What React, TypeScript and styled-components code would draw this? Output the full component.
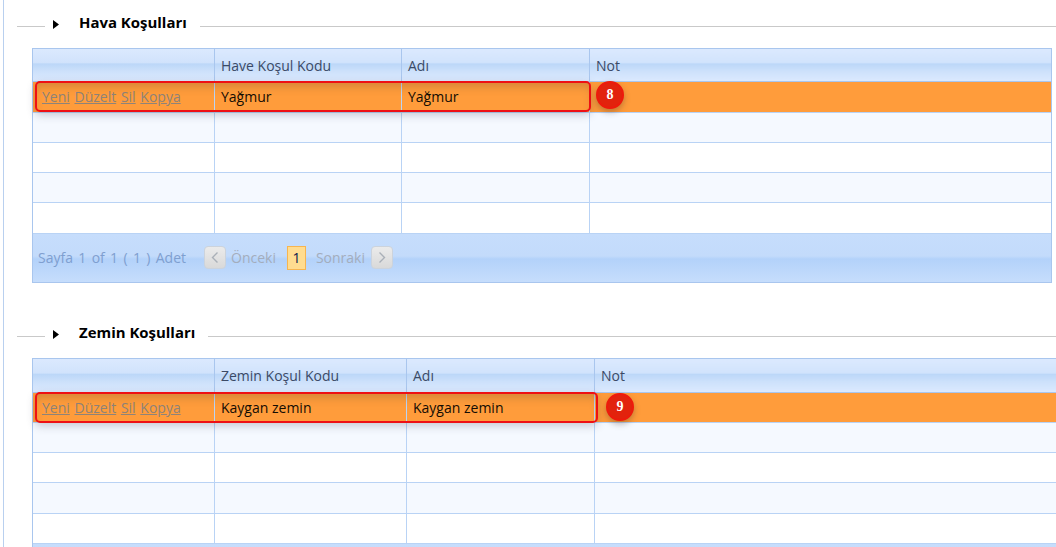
import React from "react";
import styled, { createGlobalStyle } from "styled-components";

const Global = createGlobalStyle`
  html, body { margin: 0; padding: 0; background: #fff; }
  body { width: 1056px; height: 547px; overflow: hidden; font-family: "Open Sans", "Noto Sans", sans-serif; }
`;

const Page = styled.div`
  width: 1053px;
  height: 547px;
  margin-left: 3px;
  border-left: 1px solid #b9d0ef;
  overflow: hidden;
  padding-top: 13px;
  box-sizing: border-box;
`;

const Section = styled.section<{ $gap: number }>`
  margin-bottom: ${(p) => p.$gap}px;
`;

const Title = styled.div<{ $after: number }>`
  display: flex;
  align-items: center;
  height: 22px;
  margin-left: 13px;
  margin-bottom: ${(p) => p.$after}px;
  width: 1200px;
`;

const RuleShort = styled.span`
  width: 28px;
  height: 1px;
  background: #c9c9c9;
  margin-top: 4px;
`;

const RuleLong = styled.span`
  flex: 1;
  height: 1px;
  background: #c9c9c9;
  margin-left: 13px;
  margin-top: 4px;
`;

const Arrow = styled.svg`
  width: 6px;
  height: 9px;
  margin-left: 8px;
  margin-right: 20px;
`;

const Heading = styled.h3<{ $lift: number }>`
  margin: ${(p) => -p.$lift}px 0 0;
  font: 700 14.95px "Open Sans", sans-serif;
  color: #000;
`;

const GridWrap = styled.div<{ $width: number }>`
  position: relative;
  width: ${(p) => p.$width}px;
  margin-left: 28px;
  border: 1px solid #a9c6ee;
  box-sizing: border-box;
`;

const Table = styled.table`
  border-collapse: collapse;
  table-layout: fixed;
  width: 100%;
`;

const HeadRow = styled.tr<{ $h: number }>`
  height: ${(p) => p.$h}px;
`;

const HeadCell = styled.th<{ $top: number }>`
  padding: ${(p) => p.$top}px 6.5px 0;
  box-sizing: border-box;
  text-align: left;
  font: 400 14px "Open Sans", sans-serif;
  color: #3b4a66;
  background: linear-gradient(#dbe9fe 0%, #d1e3fc 42%, #bcd7f8 47%, #cde1fb 70%, #dbe9fe 100%);
  border-right: 1px solid #a9c6ee;
  border-bottom: 1px solid #a9c6ee;
  &:last-child { border-right: 0; }
`;

const Row = styled.tr<{ $tone: "selected" | "alt" | "plain"; $h: number }>`
  height: ${(p) => p.$h}px;
  background: ${(p) => (p.$tone === "selected" ? "#ff9c3b" : p.$tone === "alt" ? "#f5f9ff" : "#fff")};
`;

const Cell = styled.td`
  padding: 0 6.5px;
  box-sizing: border-box;
  font: 400 14px "Open Sans", sans-serif;
  color: #140d04;
  border-right: 1px solid #b9d3f5;
  border-bottom: 1px solid #b9d3f5;
  white-space: nowrap;
  &:last-child { border-right: 0; }
`;

const LinkCell = styled(Cell)`
  padding-left: 9px;
`;

const RowLink = styled.a`
  color: #8e8379;
  text-decoration: underline;
  margin-right: 4.7px;
`;

const Pager = styled.div`
  display: flex;
  align-items: center;
  height: 48px;
  padding-left: 5px;
  box-sizing: border-box;
  background: linear-gradient(#c6ddfc 0%, #c3dbfb 46%, #b3d2fa 52%, #c6ddfc 100%);
  font: 400 14px "Open Sans", sans-serif;
`;

const PagerInfo = styled.span`
  color: #7f9fd0;
  margin-right: 18px;
  word-spacing: 1.7px;
`;

const PagerButton = styled.span`
  display: flex;
  align-items: center;
  justify-content: center;
  width: 22px;
  height: 23px;
  border-radius: 4px;
  border: 1px solid #ccd3dc;
  box-sizing: border-box;
  background: linear-gradient(#ebebeb, #d9d9d9);
`;

const PagerLabel = styled.span<{ $l: number; $r: number }>`
  color: #a3adbd;
  margin-left: ${(p) => p.$l}px;
  margin-right: ${(p) => p.$r}px;
`;

const PageNumber = styled.span`
  display: flex;
  align-items: center;
  justify-content: center;
  width: 19px;
  height: 24px;
  box-sizing: border-box;
  background: #ffdc90;
  border: 1px solid #f7b550;
  color: #0b1a4d;
`;

const Highlight = styled.div<{ $w: number; $t: number; $h: number }>`
  position: absolute;
  left: 2px;
  top: ${(p) => p.$t}px;
  width: ${(p) => p.$w}px;
  height: ${(p) => p.$h}px;
  box-sizing: border-box;
  border: 2px solid #ee1014;
  border-radius: 5px;
  box-shadow: 0 3px 8px rgba(60, 60, 80, 0.25), inset 0 7px 8px -3px rgba(90, 70, 50, 0.25);
  pointer-events: none;
`;

const Badge = styled.div<{ $l: number; $t: number }>`
  position: absolute;
  left: ${(p) => p.$l}px;
  top: ${(p) => p.$t}px;
  width: 28px;
  height: 28px;
  border-radius: 50%;
  box-sizing: border-box;
  background: #e2230d;
  border: 2px solid #ee1a0c;
  box-shadow: 0 3px 6px rgba(70, 50, 40, 0.35);
  display: flex;
  align-items: center;
  justify-content: center;
  color: #fff;
  font: 700 14px "Liberation Serif", serif;
`;

const Chevron = ({ left }: { left?: boolean }) => (
  <svg width="10" height="13" viewBox="0 0 10 13" fill="none">
    <path d={left ? "M7.5 1.5 2.5 6.5 7.5 11.5" : "M2.5 1.5 7.5 6.5 2.5 11.5"} stroke="#aab0b8" strokeWidth="1.4" />
  </svg>
);

const TitleArrow = () => (
  <Arrow viewBox="0 0 6 9">
    <path d="M0 0 6 4.5 0 9Z" fill="#000" />
  </Arrow>
);

type GridProps = {
  width: number;
  cols: number[];
  code: string;
  value: string;
  headH: number;
  headTop: number;
  rowH: number[];
  pagerContent?: boolean;
  mark: string;
  hl: { w: number; t: number; h: number };
  badge: { l: number; t: number };
};

const Grid = ({ width, cols, code, value, headH, headTop, rowH, pagerContent, mark, hl, badge }: GridProps) => (
  <GridWrap $width={width}>
    <Table>
      <colgroup>
        {cols.map((c, i) => (
          <col key={i} style={{ width: c }} />
        ))}
        <col />
      </colgroup>
      <thead>
        <HeadRow $h={headH}>
          <HeadCell $top={headTop} />
          <HeadCell $top={headTop}>{code}</HeadCell>
          <HeadCell $top={headTop}>Adı</HeadCell>
          <HeadCell $top={headTop}>Not</HeadCell>
        </HeadRow>
      </thead>
      <tbody>
        {rowH.map((h, i) => (
          <Row key={i} $h={h} $tone={i === 0 ? "selected" : i % 2 ? "alt" : "plain"}>
            {i === 0 ? (
              <>
                <LinkCell>
                  <RowLink>Yeni</RowLink>
                  <RowLink>Düzelt</RowLink>
                  <RowLink>Sil</RowLink>
                  <RowLink>Kopya</RowLink>
                </LinkCell>
                <Cell>{value}</Cell>
                <Cell>{value}</Cell>
                <Cell />
              </>
            ) : (
              <>
                <Cell />
                <Cell />
                <Cell />
                <Cell />
              </>
            )}
          </Row>
        ))}
      </tbody>
    </Table>
    <Pager>
      {pagerContent && (
        <>
          <PagerInfo>Sayfa 1 of 1 ( 1 ) Adet</PagerInfo>
          <PagerButton>
            <Chevron left />
          </PagerButton>
          <PagerLabel $l={5} $r={11}>Önceki</PagerLabel>
          <PageNumber>1</PageNumber>
          <PagerLabel $l={10} $r={6}>Sonraki</PagerLabel>
          <PagerButton>
            <Chevron />
          </PagerButton>
        </>
      )}
    </Pager>
    <Highlight $w={hl.w} $t={hl.t} $h={hl.h} />
    <Badge $l={badge.l} $t={badge.t}>{mark}</Badge>
  </GridWrap>
);

export default function App() {
  return (
    <Page>
      <Global />
      <Section $gap={41}>
        <Title $after={13}>
          <RuleShort />
          <TitleArrow />
          <Heading $lift={4}>Hava Koşulları</Heading>
          <RuleLong />
        </Title>
        <Grid
          width={1020}
          cols={[181, 187, 188]}
          code="Have Koşul Kodu"
          value="Yağmur"
          headH={32}
          headTop={2}
          rowH={[31, 30, 30, 30, 31]}
          pagerContent
          mark="8"
          hl={{ w: 556, t: 32, h: 31 }}
          badge={{ l: 563, t: 32 }}
        />
      </Section>
      <Section $gap={0}>
        <Title $after={12}>
          <RuleShort />
          <TitleArrow />
          <Heading $lift={6}>Zemin Koşulları</Heading>
          <RuleLong />
        </Title>
        <Grid
          width={1100}
          cols={[181, 192, 188]}
          code="Zemin Koşul Kodu"
          value="Kaygan zemin"
          headH={34}
          headTop={0}
          rowH={[30, 30, 30, 31, 30]}
          mark="9"
          hl={{ w: 563, t: 33, h: 31 }}
          badge={{ l: 573, t: 34 }}
        />
      </Section>
    </Page>
  );
}
